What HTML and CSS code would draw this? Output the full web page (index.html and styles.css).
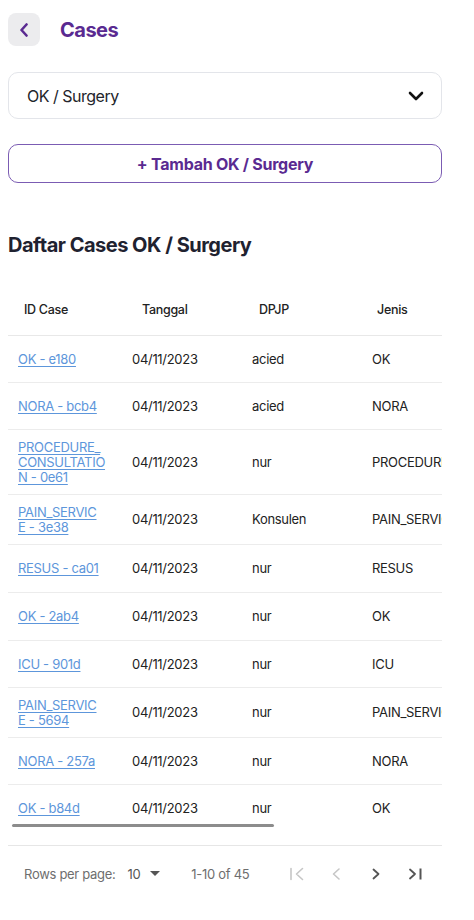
FILE: index.html
```html
<!DOCTYPE html>
<html lang="id">
<head>
<meta charset="utf-8">
<title>Cases</title>
<link rel="stylesheet" href="styles.css">
</head>
<body>
<div class="page">
  <header class="topbar">
    <button class="back" aria-label="Kembali">
      <svg width="10" height="14" viewBox="0 0 10 14"><path d="M7.5 1.5 L2.5 7 L7.5 12.5" fill="none" stroke="#5a2a91" stroke-width="2.6" stroke-linecap="round" stroke-linejoin="round"/></svg>
    </button>
    <h1 class="page-title">Cases</h1>
  </header>

  <div class="select">
    <span class="select-value">OK / Surgery</span>
    <svg class="select-chev" width="16" height="10" viewBox="0 0 16 10"><path d="M2 2 L8 8 L14 2" fill="none" stroke="#111" stroke-width="2.6" stroke-linecap="round" stroke-linejoin="round"/></svg>
  </div>

  <button class="add-btn">+ Tambah OK / Surgery</button>

  <h2 class="section-title">Daftar Cases OK / Surgery</h2>

  <div class="table-wrap">
    <div class="table-scroll">
      <div class="table">
        <div class="thead">
          <div class="th c1">ID Case</div>
          <div class="th c2">Tanggal</div>
          <div class="th c3">DPJP</div>
          <div class="th c4">Jenis</div>
          <div class="th c5">Aksi</div>
        </div>
        <div class="tr"><div class="td c1"><a href="#">OK - e180</a></div><div class="td c2">04/11/2023</div><div class="td c3">acied</div><div class="td c4">OK</div><div class="td c5">Detail</div></div>
        <div class="tr"><div class="td c1"><a href="#">NORA - bcb4</a></div><div class="td c2">04/11/2023</div><div class="td c3">acied</div><div class="td c4">NORA</div><div class="td c5">Detail</div></div>
        <div class="tr"><div class="td c1"><a href="#">PROCEDURE_<br>CONSULTATIO<br>N - 0e61</a></div><div class="td c2">04/11/2023</div><div class="td c3">nur</div><div class="td c4">PROCEDURE_CONSULTATION</div><div class="td c5">Detail</div></div>
        <div class="tr"><div class="td c1"><a href="#">PAIN_SERVIC<br>E - 3e38</a></div><div class="td c2">04/11/2023</div><div class="td c3">Konsulen</div><div class="td c4">PAIN_SERVICE</div><div class="td c5">Detail</div></div>
        <div class="tr tall"><div class="td c1"><a href="#">RESUS - ca01</a></div><div class="td c2">04/11/2023</div><div class="td c3">nur</div><div class="td c4">RESUS</div><div class="td c5">Detail</div></div>
        <div class="tr tall"><div class="td c1"><a href="#">OK - 2ab4</a></div><div class="td c2">04/11/2023</div><div class="td c3">nur</div><div class="td c4">OK</div><div class="td c5">Detail</div></div>
        <div class="tr"><div class="td c1"><a href="#">ICU - 901d</a></div><div class="td c2">04/11/2023</div><div class="td c3">nur</div><div class="td c4">ICU</div><div class="td c5">Detail</div></div>
        <div class="tr"><div class="td c1"><a href="#">PAIN_SERVIC<br>E - 5694</a></div><div class="td c2">04/11/2023</div><div class="td c3">nur</div><div class="td c4">PAIN_SERVICE</div><div class="td c5">Detail</div></div>
        <div class="tr"><div class="td c1"><a href="#">NORA - 257a</a></div><div class="td c2">04/11/2023</div><div class="td c3">nur</div><div class="td c4">NORA</div><div class="td c5">Detail</div></div>
        <div class="tr last"><div class="td c1"><a href="#">OK - b84d</a></div><div class="td c2">04/11/2023</div><div class="td c3">nur</div><div class="td c4">OK</div><div class="td c5">Detail</div></div>
      </div>
    </div>
    <div class="scroll-thumb"></div>
  </div>

  <div class="pager">
    <span class="pager-label">Rows per page:</span>
    <span class="pager-select">10
      <svg width="10" height="6" viewBox="0 0 10 6"><path d="M0 0 L10 0 L5 5 Z" fill="#555"/></svg>
    </span>
    <span class="pager-range">1-10 of 45</span>
    <div class="pager-btns">
      <button class="pg-btn disabled" aria-label="First page"><svg width="16" height="16" viewBox="0 0 16 16"><path d="M3 2.5 V13.5 M14.5 2.5 L8.5 8 L14.5 13.5" fill="none" stroke="currentColor" stroke-width="1.6" stroke-linecap="round" stroke-linejoin="round"/></svg></button>
      <button class="pg-btn disabled" aria-label="Previous page"><svg width="16" height="16" viewBox="0 0 16 16"><path d="M11 3 L5.5 8 L11 13" fill="none" stroke="currentColor" stroke-width="1.6" stroke-linecap="round" stroke-linejoin="round"/></svg></button>
      <button class="pg-btn" aria-label="Next page"><svg width="16" height="16" viewBox="0 0 16 16"><path d="M5.5 3.5 L10.5 8 L5.5 12.5" fill="none" stroke="currentColor" stroke-width="1.8" stroke-linecap="round" stroke-linejoin="round"/></svg></button>
      <button class="pg-btn" aria-label="Last page"><svg width="16" height="16" viewBox="0 0 16 16"><path d="M2 3.5 L7 8 L2 12.5" fill="none" stroke="currentColor" stroke-width="1.8" stroke-linecap="round" stroke-linejoin="round"/><path d="M12.5 2.5 V13.5" fill="none" stroke="currentColor" stroke-width="2"/></svg></button>
    </div>
  </div>
</div>
</body>
</html>
```
FILE: styles.css
```css
* { box-sizing: border-box; }
html, body { margin: 0; padding: 0; background: #fff; }
body {
  font-family: Inter, "Noto Sans", "Liberation Sans", sans-serif;
  color: #1f2230;
}
.page {
  width: 474px;
  padding: 13px 32px 0 8px;
}
.topbar {
  display: flex;
  align-items: center;
  gap: 20px;
  height: 33px;
}
.back {
  width: 32px;
  height: 33px;
  border: 0;
  border-radius: 8px;
  background: #ececee;
  display: flex;
  align-items: center;
  justify-content: center;
  padding: 0;
}
.page-title {
  margin: 0;
  font-size: 20px;
  font-weight: 700;
  letter-spacing: -0.5px;
  color: #5a2a91;
  line-height: 28px;
}
.select {
  margin-top: 26px;
  height: 47px;
  border: 1px solid #e3e5ea;
  border-radius: 10px;
  display: flex;
  align-items: center;
  justify-content: space-between;
  padding: 0 17px 0 18px;
}
.select-value {
  font-size: 16px;
  letter-spacing: -0.5px;
  color: #23252b;
}
.add-btn {
  margin-top: 25px;
  width: 100%;
  height: 39px;
  border: 1px solid #7b5cb3;
  border-radius: 10px;
  background: #fff;
  color: #5a2a91;
  font-family: inherit;
  font-size: 16px;
  font-weight: 700;
  letter-spacing: -0.25px;
  display: block;
}
.section-title {
  margin: 48px 0 0;
  font-size: 20px;
  line-height: 28px;
  font-weight: 700;
  letter-spacing: -0.5px;
  color: #1f2230;
}
.table-wrap {
  position: relative;
  margin-top: 25px;
  width: 434px;
}
.table-scroll {
  width: 434px;
  overflow-x: auto;
  scrollbar-width: none;
}
.table-scroll::-webkit-scrollbar { display: none; }
.scroll-thumb {
  position: absolute;
  left: 4px;
  bottom: 4px;
  width: 262px;
  height: 3px;
  border-radius: 2px;
  background: #8c8c8c;
}
.table {
  width: 719px;
  font-size: 13px;
  letter-spacing: -0.3px;
  color: #222;
}
.thead {
  display: flex;
  align-items: center;
  height: 52px;
  border-bottom: 1px solid #e8e8e8;
  font-size: 12.5px;
  font-weight: 500;
  color: #222;
}
.tr {
  display: flex;
  align-items: center;
  min-height: 47px;
  border-bottom: 1px solid #ececec;
}
.tr.tall { min-height: 48px; }
.tr.last { border-bottom: 0; min-height: 46px; }
.td {
  padding: 9.5px 10px;
  line-height: 15px;
}
.c1 { width: 114px; flex: none; }
.c2 { width: 120px; flex: none; }
.c3 { width: 120px; flex: none; }
.c4 { width: 180px; flex: none; white-space: nowrap; overflow: hidden; }
.c5 { width: 185px; flex: none; }
.td.c1 { padding-right: 8px; white-space: nowrap; }
.th.c1 { padding-left: 16px; }
.th.c2 { padding-left: 20px; }
.th.c3 { padding-left: 17px; }
.th.c4 { padding-left: 15px; }
.th.c5 { padding-left: 10px; }
.td a {
  color: #5d96db;
  text-decoration: underline;
  text-underline-offset: 2px;
}
.pager {
  display: flex;
  align-items: center;
  height: 56px;
  margin-top: 14px;
  border-top: 1px solid #e6e6e6;
  padding-left: 16px;
  font-size: 13px;
  letter-spacing: -0.3px;
  color: #6e6e6e;
}
.pager-select {
  margin-left: 12px;
  display: flex;
  align-items: center;
  gap: 10px;
  color: #555;
}
.pager-range {
  margin-left: 31px;
}
.pager-btns {
  margin-left: 27px;
  display: flex;
}
.pg-btn {
  width: 40px;
  height: 40px;
  border: 0;
  background: transparent;
  padding: 0;
  display: flex;
  align-items: center;
  justify-content: center;
  color: #555;
}
.pg-btn.disabled { color: #c6c6c6; }
```
